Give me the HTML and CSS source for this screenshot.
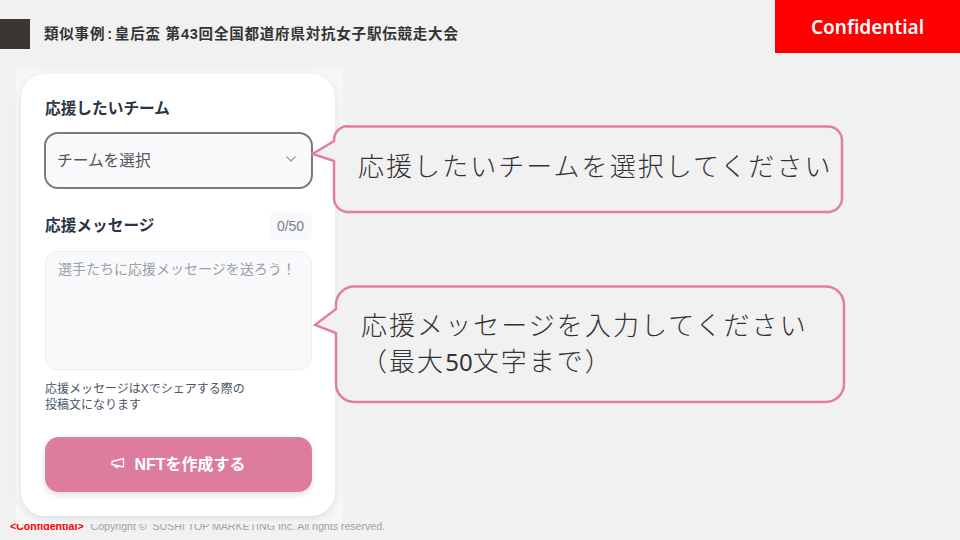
FILE: index.html
```html
<!DOCTYPE html>
<html lang="ja">
<head>
    <meta charset="UTF-8">
    <meta name="viewport" content="width=device-width, initial-scale=1.0">
    <title>類似事例</title>
    <link rel="stylesheet" href="styles.css">
</head>
<body>
    <header class="top-bar">
        <div class="top-mark"></div>
        <h1 class="top-title">類似事例&#8202;:&#8202;皇后盃 第43回全国都道府県対抗女子駅伝競走大会</h1>
        <div class="confidential">Confidential</div>
    </header>

    <footer class="footer">
        <span class="footer-mark">&lt;Confidential&gt;</span>
        <span class="footer-copy">Copyright ©&nbsp; SUSHI TOP MARKETING Inc. All rights reserved.</span>
    </footer>

    <main class="shot">
        <div class="card">
            <div class="field-label">応援したいチーム</div>
            <div class="select-box">
                <span>チームを選択</span>
                <svg class="chevron" viewBox="0 0 12 12" width="12" height="12">
                    <path d="M1.5 3.5 6 8l4.500-4.500" fill="none" stroke="#9aa0a8" stroke-width="1.300"/>
                </svg>
            </div>

            <div class="message-head">
                <div class="field-label">応援メッセージ</div>
                <div class="counter">0/50</div>
            </div>
            <div class="message-box">選手たちに応援メッセージを送ろう！</div>
            <p class="hint">応援メッセージはXでシェアする際の<br>投稿文になります</p>

            <div class="submit-btn">
                <svg class="megaphone" viewBox="0 0 14 12" width="14" height="12">
                    <path d="M1 4.500 12.500 1.500v8.500L1 7.500z M4 8.200 4.500 10H7L6.800 9" fill="none" stroke="#fff" stroke-width="1.300" stroke-linejoin="round"/>
                </svg>
                <span>NFTを作成する</span>
            </div>
        </div>
    </main>

    <!-- 吹き出し -->
    <div class="callout callout-team">
        <svg class="callout-shape" viewBox="0 0 534 91" width="534" height="91">
            <path d="M37 1.500H517a14 14 0 0 1 14 14V73a14 14 0 0 1-14 14H37a14 14 0 0 1-14-14V36L1.500 29 23 16v-1a14 14 0 0 1 14-14z" fill="#f1f1f2" stroke="#e07fa3" stroke-width="2.500"/>
        </svg>
        <p class="callout-text">応援したいチームを選択してください</p>
    </div>
    <div class="callout callout-message">
        <svg class="callout-shape" viewBox="0 0 534 119" width="534" height="119">
            <path d="M41 1.500H513a18 18 0 0 1 18 18V99a18 18 0 0 1-18 18H41a18 18 0 0 1-18-18V48L2 40 23 24v-4.500a18 18 0 0 1 18-18z" fill="#f1f1f2" stroke="#e07fa3" stroke-width="2.500"/>
        </svg>
        <p class="callout-text">応援メッセージを入力してください<br>（最大<span class="callout-num">50</span>文字まで）</p>
    </div>
</body>
</html>
```

FILE: styles.css
```css
* {
    box-sizing: border-box;
}

html, body {
    height: 100%;
}

body {
    position: relative;
    margin: 0;
    overflow: hidden;
    background-color: #f1f1f2;
    font-family: "Liberation Sans", "Noto Sans CJK JP", sans-serif;
    color: #333;
}

.top-bar {
    display: flex;
    align-items: flex-start;
    height: 69px;
}

.top-mark {
    width: 30px;
    height: 30px;
    margin-top: 19px;
    background-color: #3a3732;
}

.top-title {
    flex: 1;
    margin: 25px 0 0 14px;
    font-size: 14.500px;
    line-height: 18px;
    font-weight: 700;
    letter-spacing: 0.800px;
    color: #333;
}

.confidential {
    width: 185px;
    height: 53px;
    background-color: #ff0000;
    color: #fff;
    font-family: "Noto Sans", sans-serif;
    font-size: 19px;
    font-weight: 600;
    line-height: 54px;
    text-align: center;
}

/* 元画像の下に隠れるフッター */
.footer {
    position: absolute;
    left: 10px;
    top: 519px;
    font-size: 10.600px;
    line-height: 14px;
    white-space: nowrap;
}

.footer-mark {
    color: #ff0000;
    font-weight: 700;
    margin-right: 4px;
}

.footer-copy {
    color: #a3a3a3;
}

.shot {
    position: relative;
    width: 327px;
    height: 455px;
    margin-left: 16px;
    padding: 5px;
    background-color: #f6f7f8;
}

.card {
    width: 314px;
    height: 442px;
    padding: 24px 23px 0 24px;
    background-color: #fff;
    border-radius: 24px;
    box-shadow: 0 3px 8px rgba(0, 0, 0, 0.1);
}

.field-label {
    font-size: 15.700px;
    line-height: 22px;
    font-weight: 700;
    color: #2b3444;
}

.select-box {
    display: flex;
    align-items: center;
    justify-content: space-between;
    height: 57px;
    margin: 12px -1px 0 -1px;
    padding: 0 14px 3px 11px;
    background-color: #f8f9fb;
    border: 2px solid #777b82;
    border-radius: 14px;
    font-size: 15.700px;
    color: #555;
}

.message-head {
    display: flex;
    align-items: center;
    justify-content: space-between;
    margin-top: 23px;
}

.counter {
    width: 43px;
    height: 28px;
    background-color: #f8f9fb;
    border-radius: 6px;
    font-size: 14px;
    line-height: 28px;
    text-align: center;
    color: #7a808a;
}

.message-box {
    height: 119px;
    margin-top: 11px;
    padding: 7px 12px;
    background-color: #f8f9fb;
    border: 1px solid #eceef0;
    border-radius: 12px;
    font-size: 14px;
    line-height: 20px;
    color: #9b9fa6;
}

.hint {
    margin: 11px 0 0;
    font-size: 12px;
    line-height: 16px;
    color: #4b5563;
}

.submit-btn {
    display: flex;
    align-items: center;
    justify-content: center;
    gap: 9px;
    height: 55px;
    margin-top: 24px;
    padding-bottom: 4px;
    background-color: #dd7c9e;
    border-radius: 14px;
    box-shadow: 0 3px 6px rgba(0, 0, 0, 0.12);
    font-size: 16px;
    font-weight: 700;
    color: #fff;
}

.callout {
    position: absolute;
}

.callout-team {
    left: 311px;
    top: 125px;
    width: 534px;
    height: 91px;
}

.callout-message {
    left: 313px;
    top: 285px;
    width: 534px;
    height: 119px;
}

.callout-shape {
    display: block;
}

.callout-text {
    position: absolute;
    margin: 0;
    font-size: 26px;
    font-weight: 300;
    letter-spacing: 2.050px;
    white-space: nowrap;
    color: #333;
}

.callout-team .callout-text {
    left: 47px;
    top: 24px;
    line-height: 36px;
}

.callout-message .callout-text {
    left: 48px;
    top: 24px;
    line-height: 35px;
}

.callout-num {
    font-family: "Noto Sans", sans-serif;
    font-size: 24px;
    font-weight: 400;
    letter-spacing: 0;
}
```
